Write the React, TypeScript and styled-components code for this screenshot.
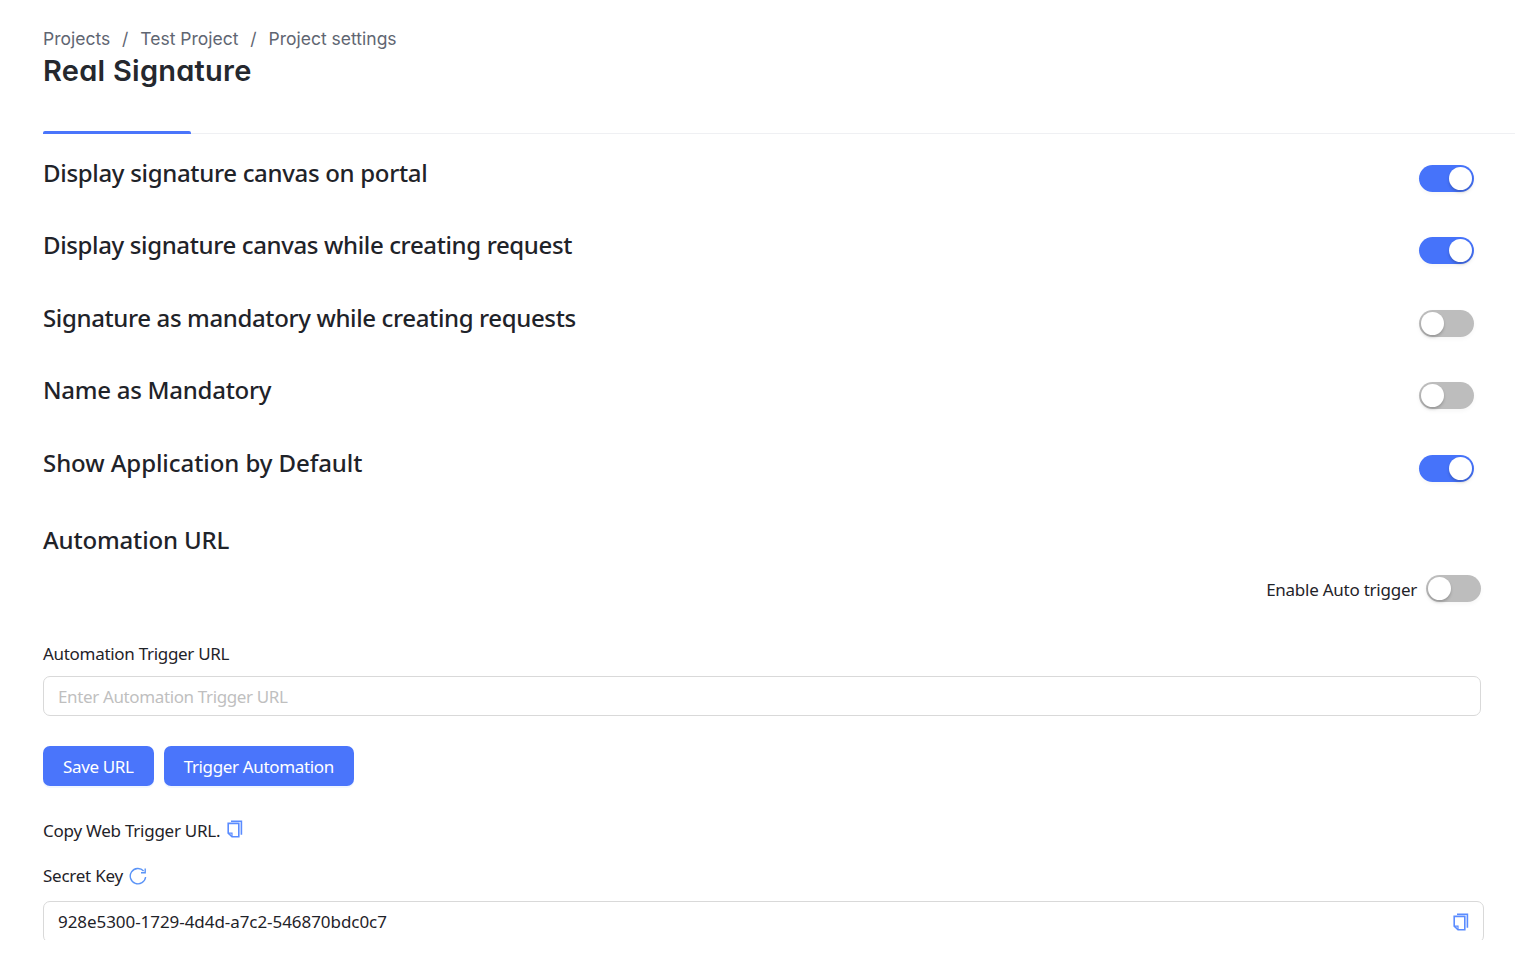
import React from "react";
import styled, { createGlobalStyle } from "styled-components";

const Global = createGlobalStyle`
  html, body { margin: 0; padding: 0; background: #fff; overflow: hidden; }
  * { box-sizing: border-box; }
`;

const Page = styled.div`
  width: 1515px;
  height: 940px;
  overflow: hidden;
  background: #fff;
  font-family: "Noto Sans", "Open Sans", sans-serif;
`;

const Header = styled.header`
  margin-left: 43px;
  padding-top: 28px;
  height: 134px;
  border-bottom: 1px solid #eff0f3;
  position: relative;
`;

const Crumbs = styled.nav`
  display: flex;
  font-family: Inter, sans-serif;
  font-size: 17.5px;
  line-height: 22px;
  color: #5f6672;
`;

const Sep = styled.span`
  margin: 0 11.9px;
`;

const Title = styled.h1`
  margin: 0;
  padding-top: 2px;
  font-family: Inter, sans-serif;
  font-feature-settings: "cv11";
  font-size: 29px;
  line-height: 38px;
  font-weight: 600;
  letter-spacing: 0.25px;
  color: #25282e;
`;

const TabBar = styled.div`
  position: absolute;
  left: 0;
  bottom: -1px;
  width: 148px;
  height: 3px;
  background: #4a75fb;
  border-radius: 2px 2px 0 0;
`;

const Settings = styled.section`
  padding: 21px 41px 0 43px;
  display: flex;
  flex-direction: column;
`;

const SettingRow = styled.div`
  display: flex;
  justify-content: space-between;
  height: 72.4px;
`;

const SettingLabel = styled.h3<{ $track: number }>`
  margin: 0;
  font-size: 24px;
  line-height: 36px;
  font-weight: 500;
  letter-spacing: ${(p) => p.$track}px;
  color: #1f2329;
`;

const Track = styled.span<{ $on: boolean }>`
  display: block;
  flex: none;
  width: 55px;
  height: 27px;
  border-radius: 14px;
  background: ${(p) => (p.$on ? "#4673fa" : "#bdbdbd")};
  position: relative;
  box-shadow: 0 2px 4px rgba(0, 0, 0, 0.04);
`;

const Knob = styled.span<{ $on: boolean }>`
  position: absolute;
  top: 2px;
  left: ${(p) => (p.$on ? "30px" : "2px")};
  width: 23px;
  height: 23px;
  border-radius: 50%;
  background: #fff;
  box-shadow: 0 2px 3px rgba(0, 0, 0, 0.2);
`;

const RowToggle = styled.div`
  padding-top: 10px;
`;

const Automation = styled.section`
  padding: 0 34px 0 43px;
  font-size: 17px;
  letter-spacing: -0.25px;
`;

const AutoTitle = styled(SettingLabel)`
  margin-top: 5px;
`;

const AutoTriggerRow = styled.div`
  display: flex;
  justify-content: flex-end;
  align-items: center;
  gap: 9px;
  margin-top: 17px;
  height: 27px;
  color: #1f2329;
`;

const AutoTriggerText = styled.span`
  transform: translateY(0.5px);
`;

const FieldLabel = styled.label`
  display: block;
  margin-top: 40px;
  line-height: 24px;
  letter-spacing: -0.3px;
  color: #1f2329;
`;

const TextField = styled.input`
  display: block;
  width: 100%;
  height: 40px;
  margin-top: 10px;
  padding: 2px 14px 0;
  border: 1px solid #d9d9d9;
  border-radius: 7px;
  outline: none;
  font-family: inherit;
  font-size: 17px;
  letter-spacing: -0.37px;
  color: #1f2329;
  background: #fff;
  &::placeholder { color: #bfbfbf; }
`;

const Actions = styled.div`
  display: flex;
  gap: 10px;
  margin-top: 30px;
`;

const Button = styled.button`
  height: 40px;
  padding: 2px 20px 0;
  border: 0;
  border-radius: 7px;
  background: #4a75fb;
  color: #fff;
  font-family: inherit;
  font-size: 17px;
  letter-spacing: -0.35px;
  box-shadow: 0 2px 0 rgba(5, 95, 255, 0.06);
`;

const InfoLine = styled.div<{ $top: number }>`
  display: flex;
  align-items: center;
  gap: 6.5px;
  margin-top: ${(p) => p.$top}px;
  height: 24px;
  padding-top: 2px;
  color: #1f2329;
`;

const KeyBox = styled.div`
  margin: 14px -3px 0 0;
  height: 42px;
  padding: 0 14px;
  display: flex;
  align-items: center;
  justify-content: space-between;
  border: 1px solid #d9d9d9;
  border-radius: 7px;
  letter-spacing: -0.06px;
  color: #1f2329;
`;

const IconButton = styled.span<{ $shift?: number }>`
  display: flex;
  transform: translateY(${(p) => p.$shift ?? 0}px);
`;

const CopyIcon = () => (
  <svg width="16" height="18" viewBox="0 0 16 18" fill="none" stroke="#5b8cff" strokeWidth="1.6">
    <path d="M4 1.2h10.4v13.6" />
    <path d="M1.2 3.4h10.6v13.4H5L1.2 13.2z" />
    <path d="M1.2 13.2H5v3.6" strokeWidth="1.2" />
  </svg>
);

const RefreshIcon = () => (
  <svg width="18" height="18" viewBox="0 0 18 18" fill="none" stroke="#5b94f7" strokeWidth="1.4">
    <path d="M14.6 3.9A7.7 7.7 0 1 0 16.6 10" />
    <path d="M16.2 1.6v4.2h-4.2" strokeLinejoin="miter" />
  </svg>
);

const Toggle = ({ on }: { on: boolean }) => (
  <Track $on={on}>
    <Knob $on={on} />
  </Track>
);

const settings = [
  { label: "Display signature canvas on portal", on: true, track: -0.32 },
  { label: "Display signature canvas while creating request", on: true, track: -0.37 },
  { label: "Signature as mandatory while creating requests", on: false, track: -0.37 },
  { label: "Name as Mandatory", on: false, track: -0.27 },
  { label: "Show Application by Default", on: true, track: -0.07 },
];

export default function App() {
  return (
    <Page>
      <Global />
      <Header>
        <Crumbs>
          <span>Projects</span>
          <Sep>/</Sep>
          <span>Test Project</span>
          <Sep>/</Sep>
          <span>Project settings</span>
        </Crumbs>
        <Title>Real Signature</Title>
        <TabBar />
      </Header>
      <Settings>
        {settings.map((s) => (
          <SettingRow key={s.label}>
            <SettingLabel $track={s.track}>{s.label}</SettingLabel>
            <RowToggle>
              <Toggle on={s.on} />
            </RowToggle>
          </SettingRow>
        ))}
      </Settings>
      <Automation>
        <AutoTitle $track={-0.16}>Automation URL</AutoTitle>
        <AutoTriggerRow>
          <AutoTriggerText>Enable Auto trigger</AutoTriggerText>
          <Toggle on={false} />
        </AutoTriggerRow>
        <FieldLabel>Automation Trigger URL</FieldLabel>
        <TextField placeholder="Enter Automation Trigger URL" />
        <Actions>
          <Button>Save URL</Button>
          <Button>Trigger Automation</Button>
        </Actions>
        <InfoLine $top={32}>
          <span>Copy Web Trigger URL.</span>
          <IconButton $shift={-2}>
            <CopyIcon />
          </IconButton>
        </InfoLine>
        <InfoLine $top={21}>
          <span>Secret Key</span>
          <IconButton>
            <RefreshIcon />
          </IconButton>
        </InfoLine>
        <KeyBox>
          <span>928e5300-1729-4d4d-a7c2-546870bdc0c7</span>
          <IconButton>
            <CopyIcon />
          </IconButton>
        </KeyBox>
      </Automation>
    </Page>
  );
}
